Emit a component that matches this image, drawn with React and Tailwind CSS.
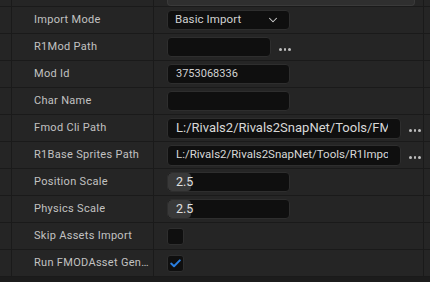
import { ChevronDown } from 'lucide-react';

const rows = [
  { label: 'Import Mode', kind: 'combo', value: 'Basic Import' },
  { label: 'R1Mod Path', kind: 'path-short', value: '' },
  { label: 'Mod Id', kind: 'text', value: '3753068336' },
  { label: 'Char Name', kind: 'text', value: '' },
  { label: 'Fmod Cli Path', kind: 'path', value: 'L:/Rivals2/Rivals2SnapNet/Tools/FMOD/fmodstudiocl.exe', big: true },
  { label: 'R1Base Sprites Path', kind: 'path', value: 'L:/Rivals2/Rivals2SnapNet/Tools/R1Import/BaseSprites' },
  { label: 'Position Scale', kind: 'spin', value: '2.5' },
  { label: 'Physics Scale', kind: 'spin', value: '2.5' },
  { label: 'Skip Assets Import', kind: 'check', value: false },
  { label: 'Run FMODAsset Generation', kind: 'check', value: true },
];

function Dots() {
  return (
    <div className="flex items-center gap-[2px] ml-[8px] mt-[5px]">
      <span className="w-[2.5px] h-[2.5px] bg-[#bdbdbd] rounded-full" />
      <span className="w-[2.5px] h-[2.5px] bg-[#bdbdbd] rounded-full" />
      <span className="w-[2.5px] h-[2.5px] bg-[#bdbdbd] rounded-full" />
    </div>
  );
}

function Value({ row }) {
  const box = 'h-[20px] bg-[#0f0f0f] border border-[#2e2e2e] rounded-[4px] flex items-center';
  switch (row.kind) {
    case 'combo':
      return (
        <div className={`${box} w-[123px] px-[7px] justify-between`}>
          <span className="text-[11.5px] tracking-[0.1px] text-[#d2d2d2]">{row.value}</span>
          <ChevronDown size={14} strokeWidth={1.8} className="text-[#d2d2d2] mr-[2px]" />
        </div>
      );
    case 'path-short':
      return (
        <div className="flex items-center">
          <div className={`${box} w-[104px]`} />
          <Dots />
        </div>
      );
    case 'text':
      return (
        <div className={`${box} w-[123px] px-[8px]`}>
          <span className="text-[11px] text-[#d2d2d2]">{row.value}</span>
        </div>
      );
    case 'path':
      return (
        <div className="flex items-center">
          <div className={`${box} h-[21px] w-[234px] pl-[8px] pr-[12px] overflow-hidden`}>
            <span className={`${row.big ? 'text-[13px]' : 'text-[11.5px]'} text-[#d8d8d8] whitespace-nowrap overflow-hidden`}>
              {row.value}
            </span>
          </div>
          <Dots />
        </div>
      );
    case 'spin':
      return (
        <div className={`${box} w-[123px] relative overflow-hidden`}>
          <div className="absolute left-0 top-0 bottom-0 w-[23px] bg-[#393939] rounded-[4px]" />
          <span className="relative pl-[8px] text-[12.5px] text-[#e0e0e0]">{row.value}</span>
        </div>
      );
    case 'check':
      return (
        <div className="w-[17px] h-[17px] bg-[#0f0f0f] border border-[#2e2e2e] rounded-[3px] flex items-center justify-center">
          {row.value && (
            <svg width="11" height="9" viewBox="0 0 11 9" fill="none">
              <path d="M1.2 4.6 L4 7.2 L9.8 1.4" stroke="#2a7fe0" strokeWidth="2" strokeLinecap="round" strokeLinejoin="round" />
            </svg>
          )}
        </div>
      );
    default:
      return null;
  }
}

export default function App() {
  return (
    <div
      className="w-[430px] h-[282px] bg-[#1c1c1c] overflow-hidden"
      style={{ fontFamily: 'Roboto, "Noto Sans", sans-serif' }}
    >
      <div className="flex h-[7px] border-b border-[#1a1a1a] bg-[#252525]">
        <div className="w-[12px] border-r border-[#1a1a1a]" />
        <div className="w-[142px] border-r border-[#1a1a1a]" />
        <div className="flex-1 border-r border-[#1a1a1a] pl-[13px]">
          <div className="w-[248px] h-[6px] bg-[#2f2f2f] border border-t-0 border-[#3a3a3a] rounded-b-[4px]" />
        </div>
        <div className="w-[6px]" />
      </div>
      {rows.map((row) => (
        <div key={row.label} className="flex h-[27px] border-b border-[#1a1a1a] bg-[#252525]">
          <div className="w-[12px] border-r border-[#1a1a1a]" />
          <div className="w-[142px] border-r border-[#1a1a1a] pl-[22px] pr-0 flex items-center">
            <span className="text-[11px] tracking-[0.3px] text-[#c2c2c2] whitespace-nowrap overflow-hidden text-ellipsis">
              {row.label}
            </span>
          </div>
          <div className="flex-1 border-r border-[#1a1a1a] pl-[13px] flex items-center">
            <Value row={row} />
          </div>
          <div className="w-[6px]" />
        </div>
      ))}
    </div>
  );
}
